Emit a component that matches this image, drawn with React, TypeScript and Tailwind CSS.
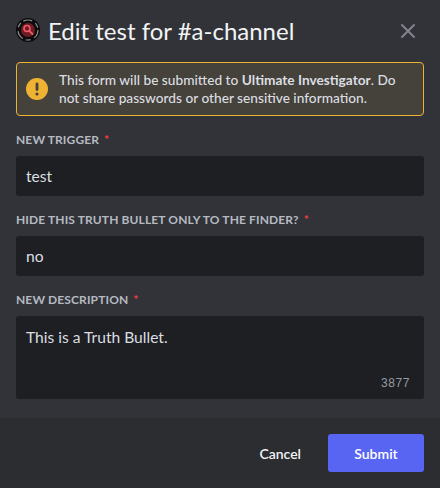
import { X } from "lucide-react";

function Field({ label, value, tall }: { label: string; value: string; tall?: boolean }) {
    return (
        <div className="flex flex-col">
            <div className="h-[16px] flex items-center text-[12px] font-bold tracking-[0.01em] uppercase text-[#b5bac1] whitespace-nowrap">
                {label}
                <span className="text-[#f23f42] pl-[5px]">*</span>
            </div>
            <div className={`mt-[8px] rounded-[3px] bg-[#1e1f22] px-[10px] text-[15.6px] text-[#dbdee1] relative ${tall ? "h-[83px] pt-[10px] leading-[22px]" : "h-[40px] leading-[40px]"}`}>
                {value}
                {tall && <span className="absolute right-[14px] bottom-[8px] text-[12px] leading-[16px] tracking-[0.05em] text-[#949ba4] font-['Liberation_Sans',sans-serif]">3877</span>}
            </div>
        </div>
    );
}

export default function App() {
    return (
        <div className="w-[440px] h-[488px] flex flex-col bg-[#313338] font-['Lato',sans-serif] overflow-hidden">
            <div className="h-[62px] flex items-center pl-[16px] pr-[20px]">
                <svg width="24" height="24" viewBox="0 0 24 24" className="shrink-0 -mt-[2px]">
                    <circle cx="12" cy="12" r="12" fill="#0c0c0d" />
                    <circle cx="12" cy="12" r="10" fill="none" stroke="#8d8d90" strokeWidth="1.2" strokeDasharray="9 4 5 3" />
                    <circle cx="12" cy="12" r="7" fill="#6e1b25" />
                    <circle cx="11" cy="10.5" r="3" fill="none" stroke="#ef5a66" strokeWidth="1.6" />
                    <path d="M13.2 12.8 L16.5 16" stroke="#ef5a66" strokeWidth="1.8" strokeLinecap="round" />
                </svg>
                <h1 className="ml-[8px] flex-1 text-[24px] leading-[30px] font-normal text-[#f2f3f5] whitespace-nowrap">Edit test for #a-channel</h1>
                <X className="w-[24px] h-[24px] text-[#80848e]" strokeWidth={2} />
            </div>

            <div className="flex-1 px-[16px] flex flex-col">
                <div className="h-[54px] flex items-center rounded-[4px] border border-[#f0b232] bg-[#45413b] pl-[9px] pr-[12px]">
                    <svg width="22" height="22" viewBox="0 0 22 22" className="shrink-0">
                        <circle cx="11" cy="11" r="11" fill="#f0b232" />
                        <rect x="9.6" y="4.5" width="2.8" height="8.5" rx="1.4" fill="#45413b" />
                        <circle cx="11" cy="16" r="1.6" fill="#45413b" />
                    </svg>
                    <p className="ml-[11px] text-[13.7px] leading-[18px] font-medium text-[#dbdee1]">
                        This form will be submitted to <strong className="font-bold">Ultimate Investigator</strong>. Do not share passwords or other sensitive information.
                    </p>
                </div>
                <div className="mt-[16px] flex flex-col gap-[16px]">
                    <Field label="New Trigger" value="test" />
                    <Field label="Hide this Truth Bullet only to the finder?" value="no" />
                    <Field label="New Description" value="This is a Truth Bullet." tall />
                </div>
            </div>

            <div className="h-[70px] bg-[#2b2d31] flex items-center justify-end gap-[27px] pr-[16px]">
                <button className="text-[14px] font-semibold text-[#f2f3f5]">Cancel</button>
                <button className="w-[96px] h-[38px] rounded-[3px] bg-[#5865f2] text-[14px] font-semibold text-white">Submit</button>
            </div>
        </div>
    );
}
